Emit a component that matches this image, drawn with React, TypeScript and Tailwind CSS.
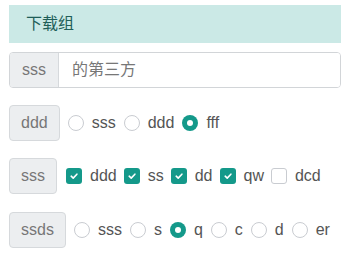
import React from "react";

const teal = "bg-[#14998a]";

function Radio({ checked, label }: { checked?: boolean; label: string }) {
  return (
    <label className="flex items-center mr-[8px]">
      {checked ? (
        <span className={`w-[16px] h-[16px] rounded-full ${teal} flex items-center justify-center`}>
          <span className="w-[6px] h-[6px] rounded-full bg-white" />
        </span>
      ) : (
        <span className="w-[16px] h-[16px] rounded-full border border-[#c9ccd1] bg-white" />
      )}
      <span className="ml-[8px] text-[16px] text-[#555]">{label}</span>
    </label>
  );
}

function Check({ checked, label }: { checked?: boolean; label: string }) {
  return (
    <label className="flex items-center mr-[7px]">
      {checked ? (
        <span className={`w-[16px] h-[16px] rounded-[3px] ${teal} flex items-center justify-center`}>
          <svg width="10" height="10" viewBox="0 0 10 10">
            <path d="M2.2 5.2 L4.2 7.1 L7.9 3.2" stroke="white" strokeWidth="1.6" fill="none" strokeLinecap="round" strokeLinejoin="round" />
          </svg>
        </span>
      ) : (
        <span className="w-[16px] h-[16px] rounded-[3px] border border-[#c9ccd1] bg-white" />
      )}
      <span className="ml-[8px] text-[16px] text-[#555]">{label}</span>
    </label>
  );
}

function Addon({ text }: { text: string }) {
  return (
    <div className="h-[36px] px-[11px] flex items-center bg-[#eceef0] border border-[#d6d9dc] rounded-[4px] text-[16px] text-[#777]">
      {text}
    </div>
  );
}

export default function App() {
  return (
    <div
      className="w-[359px] h-[258px] bg-white pt-[5px] pl-[9px]"
      style={{ fontFamily: '"Liberation Sans", "Noto Sans CJK SC", sans-serif' }}
    >
      <div className="w-[332px]">
        <div className="h-[38px] bg-[#cbe9e6] flex items-center pl-[17px] text-[16px] text-[#1f5e58]">
          下载组
        </div>
        <div className="mt-[9px] h-[36px] flex border border-[#d2d5d8] rounded-[4px] overflow-hidden">
          <div className="px-[12px] flex items-center bg-[#eceef0] border-r border-[#d6d9dc] text-[16px] text-[#777]">
            sss
          </div>
          <div className="flex-1 flex items-center pl-[13px] text-[16px] text-[#777] bg-white">
            的第三方
          </div>
        </div>
        <div className="mt-[17px] flex items-center">
          <Addon text="ddd" />
          <div className="flex items-center ml-[8px]">
            <Radio label="sss" />
            <Radio label="ddd" />
            <Radio checked label="fff" />
          </div>
        </div>
        <div className="mt-[17px] flex items-center">
          <Addon text="sss" />
          <div className="flex items-center ml-[9px]">
            <Check checked label="ddd" />
            <Check checked label="ss" />
            <Check checked label="dd" />
            <Check checked label="qw" />
            <Check label="dcd" />
          </div>
        </div>
        <div className="mt-[18px] flex items-center">
          <Addon text="ssds" />
          <div className="flex items-center ml-[8px]">
            <Radio label="sss" />
            <Radio label="s" />
            <Radio checked label="q" />
            <Radio label="c" />
            <Radio label="d" />
            <Radio label="er" />
          </div>
        </div>
      </div>
    </div>
  );
}
